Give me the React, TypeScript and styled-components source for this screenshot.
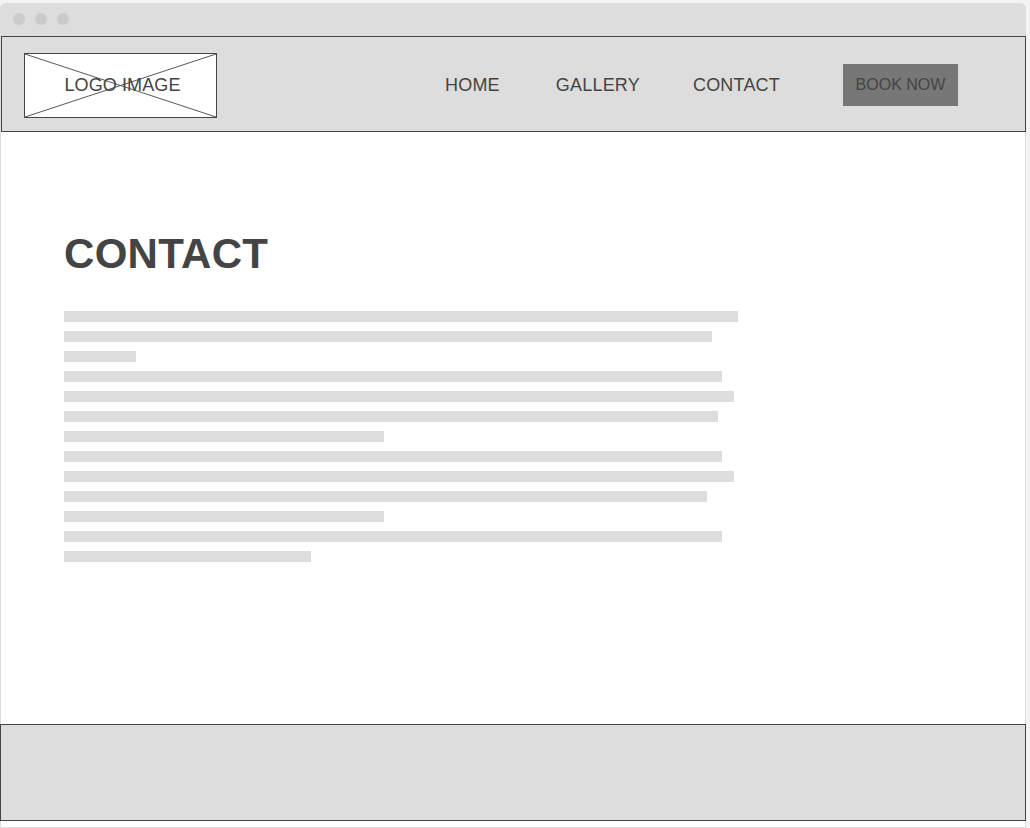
import React from "react";
import styled, { createGlobalStyle } from "styled-components";

const Global = createGlobalStyle`
  html, body { margin: 0; padding: 0; background: #f3f3f3; }
  body { font-family: "Liberation Sans", Arial, sans-serif; color: #444; overflow: hidden; }
`;

const Window = styled.div`
  width: 1026px;
  box-sizing: border-box;
  margin-top: 3px;
  height: 825px;
  background: #fff;
  border: 1px solid #ddd;
  border-top: none;
  border-radius: 6px 6px 0 0;
  display: flex;
  flex-direction: column;
`;

const TitleBar = styled.div`
  height: 33px;
  flex: none;
  margin: 0 -1px;
  border-radius: 6px 6px 0 0;
  background: #ddd;
  display: flex;
  align-items: center;
  gap: 10px;
  padding: 0 0 1px 13px;
  box-sizing: border-box;
`;

const Dot = styled.span`
  width: 12px;
  height: 12px;
  border-radius: 50%;
  background: #cbcbcb;
`;

const Header = styled.header`
  flex: none;
  height: 96px;
  box-sizing: border-box;
  margin-right: -1px;
  border: 1px solid #444;
  background: #ddd;
  display: flex;
  align-items: flex-start;
  padding: 16px 0 0 22px;
`;

const Logo = styled.div`
  position: relative;
  width: 193px;
  height: 65px;
  box-sizing: border-box;
  border: 1px solid #444;
  background: #fff;
  display: flex;
  align-items: center;
  justify-content: center;
  padding-left: 4px;
  font-size: 18px;
  color: #444;
`;

const Cross = styled.svg`
  position: absolute;
  inset: 0;
  width: 100%;
  height: 100%;
`;

const LogoText = styled.span`
  position: relative;
  letter-spacing: 0.1px;
`;

const Nav = styled.nav`
  display: flex;
  align-items: center;
  height: 42px;
  margin-top: 11px;
  margin-left: 228px;
`;

const NavLink = styled.a<{ $gap: number }>`
  margin-left: ${(p) => p.$gap}px;
  font-size: 18px;
  letter-spacing: 0.2px;
  color: #444;
  text-decoration: none;
  line-height: 1;
`;

const BookButton = styled.button`
  margin-left: 63px;
  width: 115px;
  height: 42px;
  border: none;
  background: #777;
  color: #444;
  font-family: "Liberation Sans", Arial, sans-serif;
  font-size: 16px;
  padding: 0;
`;

const Main = styled.main`
  flex: none;
  height: 592px;
  box-sizing: border-box;
  padding: 98px 0 0 63px;
`;

const Title = styled.h1`
  margin: 0;
  font-size: 42px;
  letter-spacing: 0.3px;
  line-height: 48px;
  font-weight: bold;
  color: #444;
`;

const Lines = styled.div`
  margin-top: 33px;
  display: flex;
  flex-direction: column;
  gap: 9px;
`;

const Line = styled.div`
  height: 11px;
  background: #ddd;
`;

const Footer = styled.footer`
  flex: none;
  height: 97px;
  box-sizing: border-box;
  margin: 0 -1px;
  border: 1px solid #444;
  background: #ddd;
`;

const widths = [674, 648, 72, 658, 670, 654, 320, 658, 670, 643, 320, 658, 247];

export default function App() {
  return (
    <>
      <Global />
      <Window>
        <TitleBar>
          <Dot />
          <Dot />
          <Dot />
        </TitleBar>
        <Header>
          <Logo>
            <Cross viewBox="0 0 191 63" preserveAspectRatio="none">
              <line x1="0" y1="0" x2="191" y2="63" stroke="#444" strokeWidth="0.9" />
              <line x1="191" y1="0" x2="0" y2="63" stroke="#444" strokeWidth="0.9" />
            </Cross>
            <LogoText>LOGO IMAGE</LogoText>
          </Logo>
          <Nav>
            <NavLink $gap={0}>HOME</NavLink>
            <NavLink $gap={56}>GALLERY</NavLink>
            <NavLink $gap={53}>CONTACT</NavLink>
            <BookButton>BOOK NOW</BookButton>
          </Nav>
        </Header>
        <Main>
          <Title>CONTACT</Title>
          <Lines>
            {widths.map((w, i) => (
              <Line key={i} style={{ width: w }} />
            ))}
          </Lines>
        </Main>
        <Footer />
      </Window>
    </>
  );
}
